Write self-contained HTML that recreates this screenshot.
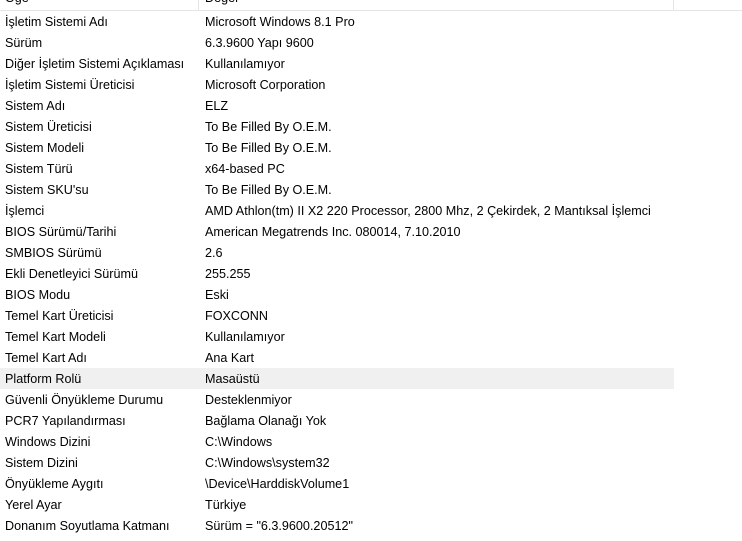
<!DOCTYPE html><html><head><style>
body{margin:0;width:742px;height:541px;overflow:hidden;background:#fff;font-family:"Liberation Sans",sans-serif;font-size:12.6px;color:#000}
.h{position:absolute;top:0;left:0;width:742px;height:10px;border-bottom:1px solid #e5e5e5;overflow:hidden}
.h span{position:absolute;top:-9px}
.d{position:absolute;top:0;height:10px;width:1px;background:#e5e5e5}
.r{position:absolute;left:0;width:674px;height:21px;line-height:23px}
.r span{position:absolute;white-space:nowrap}
.a{left:5px}.b{left:205px}
.s{background:#f0f0f0}
</style></head><body>
<div class="h"><span style="left:5px">Öğe</span><span style="left:205px">Değer</span></div>
<div class="d" style="left:198px"></div><div class="d" style="left:673px"></div>
<div class="r" style="top:11px"><span class="a">İşletim Sistemi Adı</span><span class="b">Microsoft Windows 8.1 Pro</span></div>
<div class="r" style="top:32px"><span class="a">Sürüm</span><span class="b">6.3.9600 Yapı 9600</span></div>
<div class="r" style="top:53px"><span class="a">Diğer İşletim Sistemi Açıklaması</span><span class="b">Kullanılamıyor</span></div>
<div class="r" style="top:74px"><span class="a">İşletim Sistemi Üreticisi</span><span class="b">Microsoft Corporation</span></div>
<div class="r" style="top:95px"><span class="a">Sistem Adı</span><span class="b">ELZ</span></div>
<div class="r" style="top:116px"><span class="a">Sistem Üreticisi</span><span class="b">To Be Filled By O.E.M.</span></div>
<div class="r" style="top:137px"><span class="a">Sistem Modeli</span><span class="b">To Be Filled By O.E.M.</span></div>
<div class="r" style="top:158px"><span class="a">Sistem Türü</span><span class="b">x64-based PC</span></div>
<div class="r" style="top:179px"><span class="a">Sistem SKU'su</span><span class="b">To Be Filled By O.E.M.</span></div>
<div class="r" style="top:200px"><span class="a">İşlemci</span><span class="b">AMD Athlon(tm) II X2 220 Processor, 2800 Mhz, 2 Çekirdek, 2 Mantıksal İşlemci</span></div>
<div class="r" style="top:221px"><span class="a">BIOS Sürümü/Tarihi</span><span class="b">American Megatrends Inc. 080014, 7.10.2010</span></div>
<div class="r" style="top:242px"><span class="a">SMBIOS Sürümü</span><span class="b">2.6</span></div>
<div class="r" style="top:263px"><span class="a">Ekli Denetleyici Sürümü</span><span class="b">255.255</span></div>
<div class="r" style="top:284px"><span class="a">BIOS Modu</span><span class="b">Eski</span></div>
<div class="r" style="top:305px"><span class="a">Temel Kart Üreticisi</span><span class="b">FOXCONN</span></div>
<div class="r" style="top:326px"><span class="a">Temel Kart Modeli</span><span class="b">Kullanılamıyor</span></div>
<div class="r" style="top:347px"><span class="a">Temel Kart Adı</span><span class="b">Ana Kart</span></div>
<div class="r s" style="top:368px"><span class="a">Platform Rolü</span><span class="b">Masaüstü</span></div>
<div class="r" style="top:389px"><span class="a">Güvenli Önyükleme Durumu</span><span class="b">Desteklenmiyor</span></div>
<div class="r" style="top:410px"><span class="a">PCR7 Yapılandırması</span><span class="b">Bağlama Olanağı Yok</span></div>
<div class="r" style="top:431px"><span class="a">Windows Dizini</span><span class="b">C:\Windows</span></div>
<div class="r" style="top:452px"><span class="a">Sistem Dizini</span><span class="b">C:\Windows\system32</span></div>
<div class="r" style="top:473px"><span class="a">Önyükleme Aygıtı</span><span class="b">\Device\HarddiskVolume1</span></div>
<div class="r" style="top:494px"><span class="a">Yerel Ayar</span><span class="b">Türkiye</span></div>
<div class="r" style="top:515px"><span class="a">Donanım Soyutlama Katmanı</span><span class="b">Sürüm = "6.3.9600.20512"</span></div>
</body></html>
